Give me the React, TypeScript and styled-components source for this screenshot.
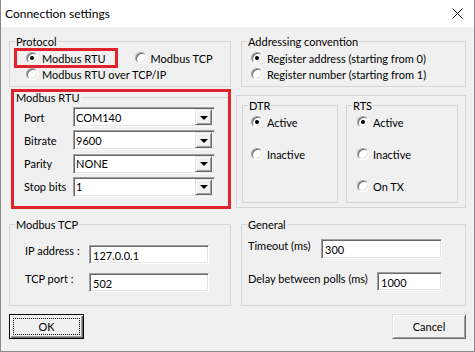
import React from "react";
import styled, { createGlobalStyle, css } from "styled-components";

const GlobalStyle = createGlobalStyle`
  html, body {
    margin: 0;
    padding: 0;
    background: #ffffff;
  }
  * {
    box-sizing: border-box;
  }
  body {
    font-family: Lato, "Noto Sans", sans-serif;
    font-size: 11px;
    color: #000000;
  }
`;

const sunken = css`
  border: 1px solid;
  border-color: #a0a0a0 #ffffff #ffffff #a0a0a0;
  box-shadow: inset 1px 1px 0 #696969, inset -1px -1px 0 #e3e3e3;
`;

const raised = css`
  border: 1px solid;
  border-color: #e3e3e3 #696969 #696969 #e3e3e3;
  box-shadow: inset 1px 1px 0 #ffffff, inset -1px -1px 0 #a0a0a0;
`;

const MARK = "#e1242c";

const Window = styled.div`
  width: 475px;
  height: 352px;
  display: flex;
  flex-direction: column;
  border: 1px solid #8a8a8a;
  border-top: none;
  background: #f0f0f0;
`;

const TitleBar = styled.header`
  height: 27px;
  flex: none;
  display: flex;
  align-items: center;
  justify-content: space-between;
  padding: 0 11px 0 4px;
  background: #ffffff;
  font-size: 12px;
`;

const Body = styled.main`
  flex: 1;
  display: grid;
  grid-template-columns: 222px 225px;
  grid-template-rows: 55px 128px 97px 25px;
  column-gap: 10px;
  align-items: start;
  padding: 7px 8px 0;
`;

// --pad is the content inset; the caption cancels it so every caption sits 5px in
const Group = styled.fieldset<{ $h: number; $pad: number; $flat?: boolean }>`
  --pad: ${(p) => p.$pad}px;
  --cap: ${(p) => (p.$flat ? 1 : 5)}px;
  margin: 0;
  min-width: 0;
  height: ${(p) => p.$h}px;
  padding: 0 0 0 var(--pad);
  border: 1px solid #d5d5d5;
  ${(p) =>
    p.$flat &&
    css`
      margin-top: -2px;
      border-width: 1px 0 0 0;
    `}
`;

const Caption = styled.legend`
  margin-left: calc(var(--cap) - var(--pad));
  padding: 0 1px;
  line-height: 15px;
`;

const ChoiceRow = styled.div<{ $top?: number }>`
  display: flex;
  align-items: center;
  margin-top: ${(p) => p.$top ?? 0}px;
`;

const Choice = styled.label<{ $marked?: boolean; $gap?: number }>`
  display: flex;
  align-items: center;
  gap: 4px;
  height: 16px;
  white-space: nowrap;
  margin-right: ${(p) => p.$gap ?? 0}px;
  ${(p) =>
    p.$marked &&
    css`
      margin-left: -10px;
      padding: 0 10px;
      outline: 3px solid ${MARK};
      outline-offset: -1px;
    `}
`;

const Radio = styled.span<{ $on?: boolean }>`
  position: relative;
  width: 12px;
  height: 12px;
  flex: none;
  border-radius: 50%;
  background: #ffffff;
  border: 1px solid;
  border-color: #a0a0a0 #ffffff #ffffff #a0a0a0;
  box-shadow: inset 1px 1px 0 #696969, inset -1px -1px 0 #e3e3e3;
  &::after {
    content: "";
    display: ${(p) => (p.$on ? "block" : "none")};
    position: absolute;
    left: 3px;
    top: 3px;
    width: 4px;
    height: 4px;
    border-radius: 50%;
    background: #000000;
  }
`;

const Highlight = styled.div`
  width: 220px;
  height: 120px;
  margin-left: 2px;
  border: 3px solid ${MARK};
`;

const FieldRow = styled.div<{ $top: number }>`
  display: flex;
  align-items: center;
  margin-top: ${(p) => p.$top}px;
`;

const FieldLabel = styled.span<{ $w: number; $lift?: number }>`
  width: ${(p) => p.$w}px;
  flex: none;
  white-space: nowrap;
  line-height: 15px;
  padding-bottom: ${(p) => (p.$lift ?? 0) * 2}px;
`;

const Combo = styled.div`
  width: 142px;
  height: 20px;
  display: flex;
  align-items: center;
  justify-content: space-between;
  padding: 0 2px 0 2px;
  background: #ffffff;
  ${sunken}
`;

const DropButton = styled.span`
  width: 17px;
  height: 16px;
  display: flex;
  align-items: center;
  justify-content: center;
  background: #f0f0f0;
  ${raised}
  &::before {
    content: "";
    border-left: 4px solid transparent;
    border-right: 4px solid transparent;
    border-top: 4px solid #000000;
    margin-top: 1px;
  }
`;

const TextBox = styled.div<{ $w: number; $h: number }>`
  width: ${(p) => p.$w}px;
  height: ${(p) => p.$h}px;
  display: flex;
  align-items: center;
  padding: 1px 3px 0;
  background: #ffffff;
  ${sunken}
`;

const LineBox = styled.div`
  width: 230px;
  height: 113px;
  margin: 6px 0 0 -5px;
  display: flex;
  gap: 8px;
  padding: 2px 0 0 5px;
  border: 1px solid #d5d5d5;
`;

const SignalColumn = styled.div`
  display: flex;
  flex-direction: column;
  gap: 16px;
  margin-top: 1px;
`;

const Button = styled.button<{ $primary?: boolean }>`
  width: ${(p) => (p.$primary ? 75 : 74)}px;
  height: 25px;
  padding: 0;
  font: inherit;
  color: #000000;
  background: #f0f0f0;
  ${raised}
  ${(p) =>
    p.$primary &&
    css`
      border: 1px solid #000000;
      box-shadow: inset 1px 1px 0 #ffffff, inset -1px -1px 0 #696969,
        inset -2px -2px 0 #a0a0a0;
      outline: 1px dotted #000000;
      outline-offset: -5px;
    `}
  justify-self: ${(p) => (p.$primary ? "start" : "end")};
`;

const rtuRows = [
  { label: "Port", value: "COM140" },
  { label: "Bitrate", value: "9600" },
  { label: "Parity", value: "NONE" },
  { label: "Stop bits", value: "1" },
];

export default function App() {
  return (
    <>
      <GlobalStyle />
      <Window>
        <TitleBar>
          <span>Connection settings</span>
          <svg width="11" height="11" viewBox="0 0 11 11">
            <path d="M0.5 0.5 L10.5 10.5 M10.5 0.5 L0.5 10.5" stroke="#000" strokeWidth="1" />
          </svg>
        </TitleBar>
        <Body>
          <Group $h={53} $pad={16}>
            <Caption>Protocol</Caption>
            <ChoiceRow $top={1}>
              <Choice $marked $gap={19}>
                <Radio $on />
                Modbus RTU
              </Choice>
              <Choice>
                <Radio />
                Modbus TCP
              </Choice>
            </ChoiceRow>
            <ChoiceRow>
              <Choice>
                <Radio />
                Modbus RTU over TCP/IP
              </Choice>
            </ChoiceRow>
          </Group>

          <Group $h={53} $pad={9}>
            <Caption>Addressing convention</Caption>
            <ChoiceRow $top={1}>
              <Choice>
                <Radio $on />
                Register address (starting from 0)
              </Choice>
            </ChoiceRow>
            <ChoiceRow>
              <Choice>
                <Radio />
                Register number (starting from 1)
              </Choice>
            </ChoiceRow>
          </Group>

          <Highlight>
            <Group $h={116} $pad={10} $flat>
              <Caption>Modbus RTU</Caption>
              {rtuRows.map((r, i) => (
                <FieldRow key={r.label} $top={i === 0 ? 2 : 3.33}>
                  <FieldLabel $w={49}>{r.label}</FieldLabel>
                  <Combo>
                    <span>{r.value}</span>
                    <DropButton />
                  </Combo>
                </FieldRow>
              ))}
            </Group>
          </Highlight>

          <LineBox>
            <Group $h={105} $pad={8} style={{ width: 96 }}>
              <Caption>DTR</Caption>
              <SignalColumn>
                <Choice>
                  <Radio $on />
                  Active
                </Choice>
                <Choice>
                  <Radio />
                  Inactive
                </Choice>
              </SignalColumn>
            </Group>
            <Group $h={105} $pad={10} style={{ width: 112 }}>
              <Caption>RTS</Caption>
              <SignalColumn>
                <Choice>
                  <Radio $on />
                  Active
                </Choice>
                <Choice>
                  <Radio />
                  Inactive
                </Choice>
                <Choice>
                  <Radio />
                  On TX
                </Choice>
              </SignalColumn>
            </Group>
          </LineBox>

          <Group $h={89} $pad={15}>
            <Caption>Modbus TCP</Caption>
            <FieldRow $top={11}>
              <FieldLabel $w={64} $lift={4}>
                IP address :
              </FieldLabel>
              <TextBox $w={120} $h={19}>127.0.0.1</TextBox>
            </FieldRow>
            <FieldRow $top={5}>
              <FieldLabel $w={64} $lift={4}>
                TCP port :
              </FieldLabel>
              <TextBox $w={120} $h={19}>502</TextBox>
            </FieldRow>
          </Group>

          <Group $h={89} $pad={6}>
            <Caption>General</Caption>
            <FieldRow $top={6}>
              <FieldLabel $w={73} $lift={3}>
                Timeout (ms)
              </FieldLabel>
              <TextBox $w={121} $h={20}>300</TextBox>
            </FieldRow>
            <FieldRow $top={12}>
              <FieldLabel $w={129} $lift={3}>
                Delay between polls (ms)
              </FieldLabel>
              <TextBox $w={65} $h={19}>1000</TextBox>
            </FieldRow>
          </Group>

          <Button $primary>OK</Button>
          <Button>Cancel</Button>
        </Body>
      </Window>
    </>
  );
}
